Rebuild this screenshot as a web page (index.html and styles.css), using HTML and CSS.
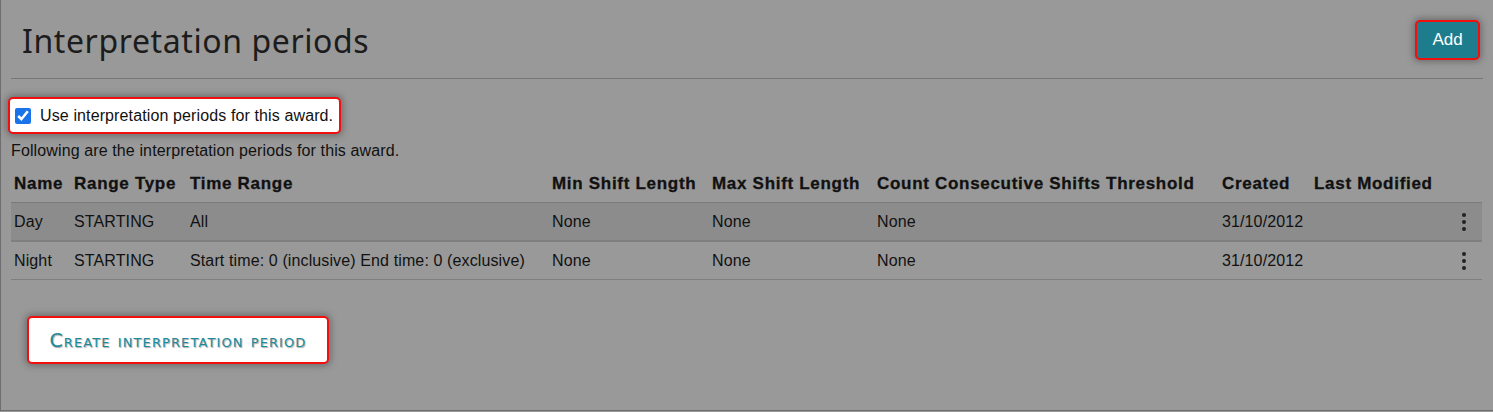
FILE: index.html
```html
<!DOCTYPE html>
<html>
<head>
    <title>Interpretation periods</title>
    <link rel="stylesheet" href="styles.css">
</head>
<body>
    <div class="page">
        <div class="page-header">
            <h1 class="page-title">Interpretation periods</h1>
            <button class="btn-add highlight">Add</button>
        </div>

        <label class="use-periods highlight">
            <input type="checkbox" checked>
            <span>Use interpretation periods for this award.</span>
        </label>
        <p class="intro">Following are the interpretation periods for this award.</p>

        <table class="periods">
            <colgroup>
                <col style="width: 60px">
                <col style="width: 116px">
                <col style="width: 362px">
                <col style="width: 160px">
                <col style="width: 165px">
                <col style="width: 345px">
                <col style="width: 92px">
                <col style="width: 134px">
                <col>
            </colgroup>
            <thead>
                <tr>
                    <th>Name</th>
                    <th>Range Type</th>
                    <th>Time Range</th>
                    <th>Min Shift Length</th>
                    <th>Max Shift Length</th>
                    <th>Count Consecutive Shifts Threshold</th>
                    <th>Created</th>
                    <th>Last Modified</th>
                    <th></th>
                </tr>
            </thead>
            <tbody>
                <tr class="hover">
                    <td>Day</td>
                    <td>STARTING</td>
                    <td>All</td>
                    <td>None</td>
                    <td>None</td>
                    <td>None</td>
                    <td>31/10/2012</td>
                    <td></td>
                    <td class="actions"><span class="kebab"><i></i><i></i><i></i></span></td>
                </tr>
                <tr>
                    <td>Night</td>
                    <td>STARTING</td>
                    <td>Start time: 0 (inclusive) End time: 0 (exclusive)</td>
                    <td>None</td>
                    <td>None</td>
                    <td>None</td>
                    <td>31/10/2012</td>
                    <td></td>
                    <td class="actions"><span class="kebab"><i></i><i></i><i></i></span></td>
                </tr>
            </tbody>
        </table>

        <div class="create-row">
            <button class="btn-create highlight">Create interpretation period</button>
        </div>
    </div>
</body>
</html>
```

FILE: styles.css
```css
html, body {
  margin: 0;
  padding: 0;
  background: #999999;
}

body {
  font-family: "Liberation Sans", Arial, sans-serif;
  font-size: 16px;
  letter-spacing: 0.12px;
  color: #111;
}

.page {
  height: 411px;
  box-sizing: border-box;
  border-left: 1px solid #6e6e6e;
  border-bottom: 1px solid #6e6e6e;
  padding: 0 10px 0 10px;
}

.page-header {
  display: flex;
  justify-content: space-between;
  align-items: center;
  height: 78px;
  border-bottom: 1px solid #777;
  padding-right: 3px;
}

.page-title {
  margin: 0 0 0 11px;
  font-family: "Noto Sans", sans-serif;
  font-weight: 400;
  font-size: 32px;
  letter-spacing: 0.6px;
  color: #1c1c1c;
  position: relative;
  top: 1px;
}

.highlight {
  background: #fff;
  border: 2px solid #f01010;
  border-radius: 5px;
  box-shadow: 0 0 6px 2px rgba(60, 60, 60, 0.45);
}

.btn-add {
  background: #1e7d8d;
  color: #fff;
  font-family: "Liberation Sans", Arial, sans-serif;
  font-size: 17px;
  width: 65px;
  height: 40px;
  margin-top: 2px;
  cursor: pointer;
}

.use-periods {
  display: inline-flex;
  align-items: center;
  gap: 9px;
  margin: 18px 0 0 -3px;
  padding: 0 6px 0 5px;
  height: 33px;
}

.use-periods input {
  margin: 0;
  width: 16px;
  height: 16px;
  accent-color: #1a73e8;
}

.intro {
  margin: 7px 0 0 0;
  line-height: 20px;
}

.periods {
  width: 1471px;
  table-layout: fixed;
  border-collapse: collapse;
  margin-top: 4px;
}

.periods th {
  text-align: left;
  font-weight: bold;
  font-size: 17px;
  letter-spacing: 0.7px;
  -webkit-text-stroke: 0.3px #111;
  padding: 0 3px;
  height: 37px;
  white-space: nowrap;
  border-bottom: 1px solid #7a7a7a;
}

.periods td {
  padding: 0 3px;
  height: 37px;
  white-space: nowrap;
  border-bottom: 2px solid #7f7f7f;
}

.periods tbody tr:last-child td {
  border-bottom-width: 1px;
}

.periods tr.hover td {
  background: #8c8c8c;
}

.actions {
  text-align: center;
}

.kebab {
  display: inline-flex;
  flex-direction: column;
  gap: 3px;
  vertical-align: middle;
}

.kebab i {
  width: 4px;
  height: 4px;
  border-radius: 50%;
  background: #222;
}

.create-row {
  padding: 36px 0 0 16px;
}

.btn-create {
  font-family: "DejaVu Sans", Verdana, sans-serif;
  font-variant: small-caps;
  font-size: 19px;
  letter-spacing: 1.1px;
  color: #1c8c9c;
  text-shadow: 1px 1px 1px rgba(0, 0, 0, 0.35);
  width: 302px;
  height: 48px;
  padding: 0;
  cursor: pointer;
}
```
